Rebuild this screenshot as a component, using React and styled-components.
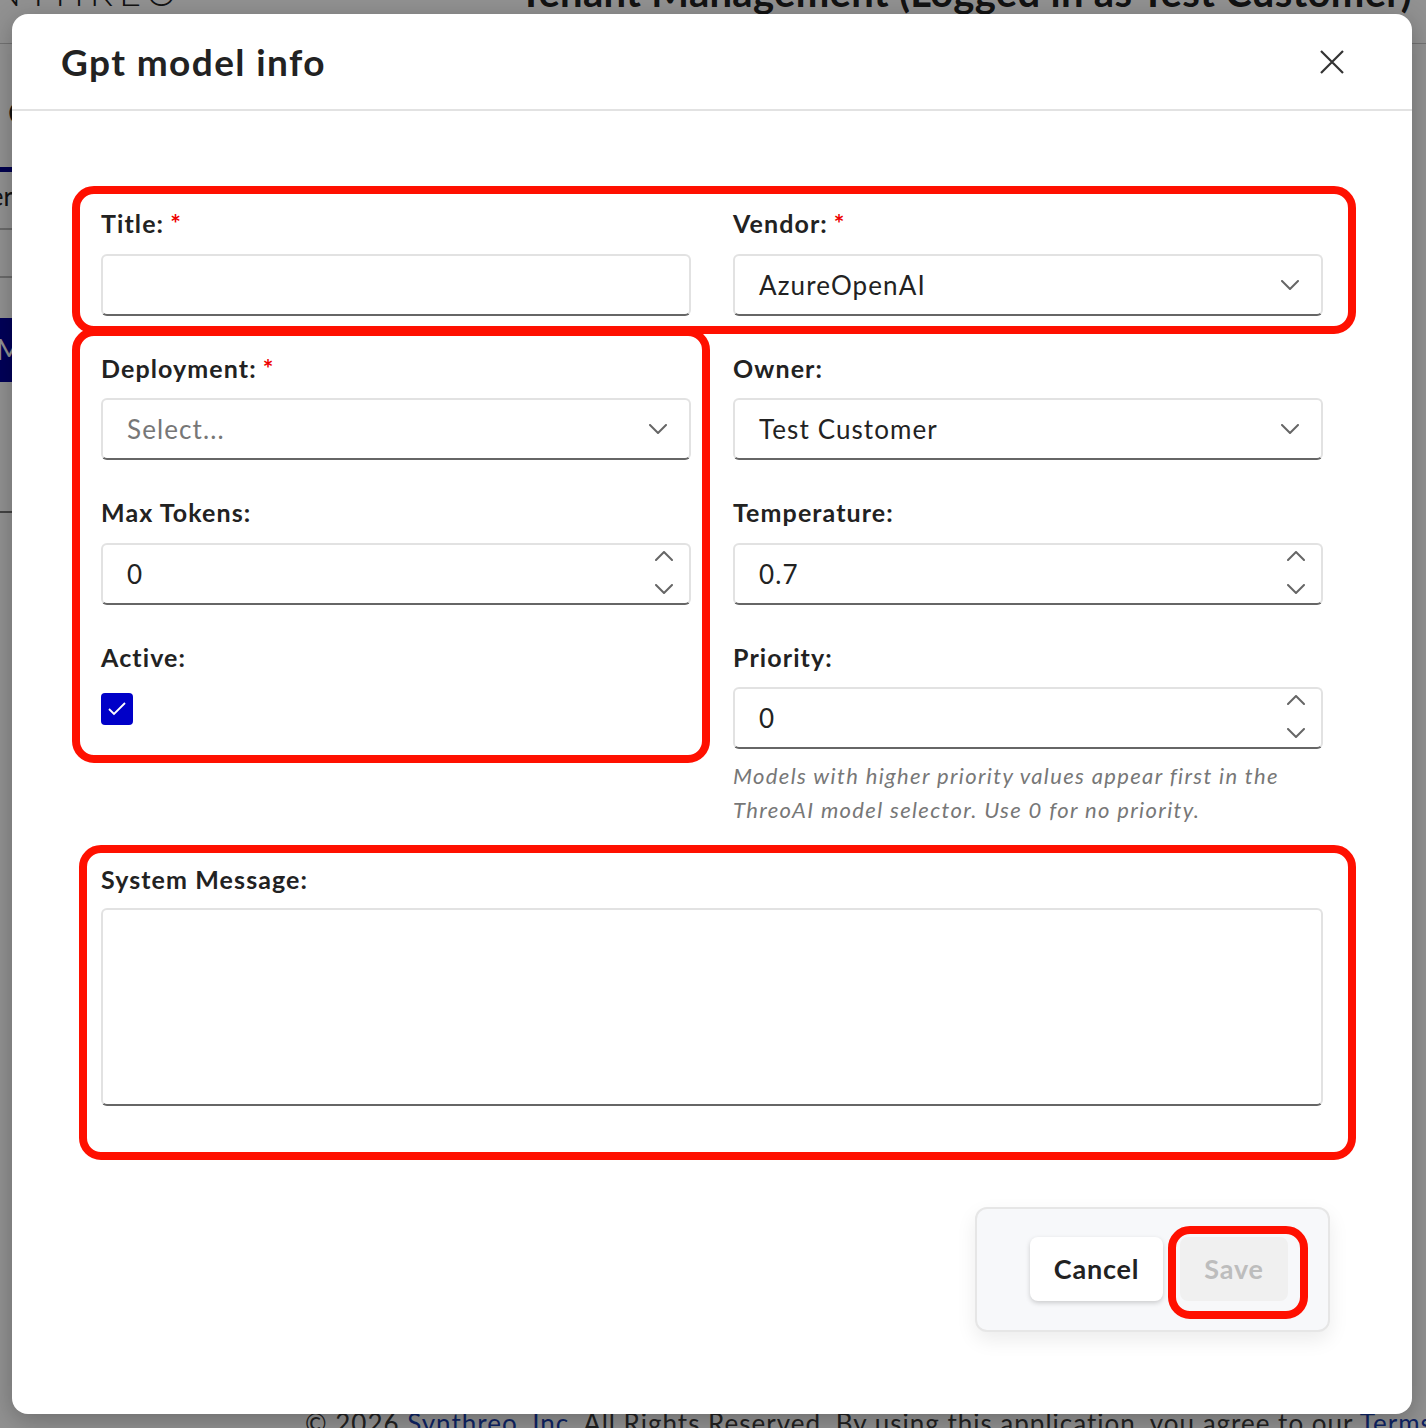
import React from 'react'
import styled, { createGlobalStyle } from 'styled-components'

const GlobalStyle = createGlobalStyle`
  html, body { margin: 0; padding: 0; }
  body { font-family: Lato, "Noto Sans", sans-serif; }
  * { box-sizing: border-box; }
`

const Page = styled.div`
  position: relative;
  width: 1426px;
  height: 1428px;
  overflow: hidden;
  background: #fff;
  display: flex;
  flex-direction: column;
  color: #222;
`

const TopBar = styled.header`
  height: 44px;
  border-bottom: 1px solid #c8c8c8;
  display: flex;
  justify-content: space-between;
  align-items: flex-start;
  padding: 0 14px 0 0;
  overflow: hidden;
`

const Logo = styled.div`
  font-size: 38px;
  font-weight: 300;
  letter-spacing: 6px;
  line-height: 40px;
  margin-top: -29px;
  margin-left: -62px;
`

const PageTitle = styled.div`
  font-size: 40px;
  font-weight: 700;
  letter-spacing: 0.3px;
  line-height: 40px;
  margin-top: -28px;
`

const SideContent = styled.div`
  display: flex;
  flex-direction: column;
  width: 400px;
`

const Heading = styled.div`
  font-size: 30px;
  height: 123px;
  padding: 50px 0 0 8px;
`

const TabLine = styled.div`
  height: 5px;
  width: 200px;
  background: #00008b;
`

const TableHead = styled.div`
  height: 56px;
  width: 13px;
  display: flex;
  justify-content: flex-end;
  white-space: nowrap;
  overflow: hidden;
  font-size: 26px;
  padding: 8px 0 0 0;
`

const TableRow = styled.div`
  height: ${p => p.$h}px;
  border-top: 2px solid ${p => p.$dark ? '#777' : '#bbb'};
`

const BlueBlock = styled.div`
  height: 64px;
  width: 240px;
  margin-bottom: 129px;
  background: #00009c;
  color: #fff;
  font-size: 28px;
  padding: 14px 0 0 0;
  margin-left: -4px;
`

const PageFooter = styled.footer`
  margin-top: auto;
  height: 20px;
  overflow: hidden;
  white-space: nowrap;
  padding-left: 305px;
  font-size: 26px;
  letter-spacing: 1px;
  line-height: 30px;
  color: #3a3a3a;
  a { color: #1a3fb0; text-decoration: none; }
`

const Overlay = styled.div`
  position: absolute;
  inset: 0;
  background: rgba(0, 0, 0, 0.43);
  padding: 14px 14px 14px 12px;
`

const Modal = styled.div`
  width: 1400px;
  height: 1400px;
  background: #fff;
  border-radius: 16px;
  box-shadow: 0 6px 24px rgba(0, 0, 0, 0.25);
  display: flex;
  flex-direction: column;
`

const ModalHeader = styled.div`
  height: 97px;
  border-bottom: 2px solid #e2e2e2;
  display: flex;
  align-items: center;
  justify-content: space-between;
  padding: 0 68px 0 49px;
`

const ModalTitle = styled.h2`
  margin: 0;
  font-size: 37px;
  font-weight: 700;
  color: #222;
  letter-spacing: 1.4px;
`

const CloseButton = styled.button`
  border: none;
  background: none;
  padding: 0;
  width: 24px;
  height: 24px;
  display: flex;
  cursor: pointer;
`

const Body = styled.div`
  padding: 97px 89px 0;
`

const Grid = styled.div`
  display: grid;
  grid-template-columns: 1fr 1fr;
  column-gap: 42px;
  row-gap: 37px;
`

const Field = styled.div`
  display: flex;
  flex-direction: column;
  grid-column: ${p => p.$full ? '1 / -1' : 'auto'};
`

const Label = styled.label`
  font-size: 25px;
  font-weight: 700;
  letter-spacing: 1.1px;
  line-height: 30px;
  color: #222;
  margin-bottom: ${p => p.$gap || 16}px;
  span { color: #e00; margin-left: 6px; }
`

const Box = styled.div`
  height: 62px;
  border: 2px solid #e2e2e2;
  border-bottom: 2px solid #666;
  border-radius: 6px;
  display: flex;
  align-items: center;
  padding: 0 22px 0 24px;
  font-size: 26px;
  letter-spacing: 1.1px;
  color: ${p => p.$placeholder ? '#777' : '#222'};
`

const BoxText = styled.div`
  flex: 1;
`

const TextInput = styled.input`
  flex: 1;
  border: none;
  outline: none;
  background: transparent;
  font: inherit;
  letter-spacing: inherit;
  color: inherit;
  padding: 0;
  min-width: 0;
`

const Spinner = styled.div`
  display: flex;
  flex-direction: column;
  gap: 23px;
  margin-right: -6px;
  margin-top: -3px;
`

const Checkbox = styled.span`
  width: 32px;
  height: 32px;
  margin-top: 5px;
  border-radius: 4px;
  background: #0000c8;
  display: flex;
  align-items: center;
  justify-content: center;
`

const Help = styled.p`
  margin: 10px 0 0;
  font-size: 22px;
  line-height: 34px;
  letter-spacing: 1.35px;
  font-style: italic;
  color: #777;
`

const TextArea = styled.textarea`
  height: 198px;
  border: 2px solid #e2e2e2;
  border-bottom: 2px solid #666;
  border-radius: 6px;
  resize: none;
  outline: none;
  font: inherit;
  font-size: 26px;
  padding: 16px 24px;
`

const FooterRow = styled.div`
  margin-top: auto;
  display: flex;
  justify-content: flex-end;
  padding: 0 82px 82px 0;
`

const ActionBox = styled.div`
  width: 355px;
  height: 125px;
  background: #f7f8fa;
  border: 2px solid #e6e6e6;
  border-radius: 12px;
  box-shadow: 0 8px 20px rgba(0, 0, 0, 0.08);
  display: flex;
  align-items: center;
  justify-content: flex-end;
  gap: 17px;
  padding: 0 40px 2px 0;
`

const Button = styled.button`
  height: 64px;
  width: ${p => p.$w}px;
  border: none;
  border-radius: 8px;
  font-family: inherit;
  font-size: 27px;
  font-weight: 700;
  letter-spacing: 0.8px;
  background: ${p => p.$disabled ? '#f0f0f0' : '#fff'};
  color: ${p => p.$disabled ? '#bdbdbd' : '#222'};
  box-shadow: ${p => p.$disabled ? 'none' : '0 2px 5px rgba(0,0,0,0.18)'};
  cursor: ${p => p.$disabled ? 'default' : 'pointer'};
`

const Mark = styled.div`
  position: absolute;
  left: ${p => p.$x}px;
  top: ${p => p.$y}px;
  width: ${p => p.$w}px;
  height: ${p => p.$h}px;
  border: 8px solid #ff1000;
  border-radius: 22px;
  pointer-events: none;
`

const Chevron = ({ up }) => (
  <svg width="18" height="10" viewBox="0 0 18 10">
    <polyline
      points={up ? '1,9 9,1 17,9' : '1,1 9,9 17,1'}
      fill="none"
      stroke="#666"
      strokeWidth="2"
      strokeLinecap="round"
      strokeLinejoin="round"
    />
  </svg>
)

const SelectBox = ({ value, placeholder }) => (
  <Box $placeholder={!value}>
    <BoxText>{value || placeholder}</BoxText>
    <Chevron />
  </Box>
)

const NumberBox = ({ value }) => (
  <Box>
    <TextInput defaultValue={value} />
    <Spinner>
      <Chevron up />
      <Chevron />
    </Spinner>
  </Box>
)

const App = () => {
  return (
    <Page>
      <GlobalStyle />
      <TopBar>
        <Logo>SYNTHREO</Logo>
        <PageTitle>Tenant Management (Logged in as Test Customer)</PageTitle>
      </TopBar>
      <SideContent>
        <Heading>Customers</Heading>
        <TabLine />
        <TableHead>Customer</TableHead>
        <TableRow $h={48} />
        <TableRow $h={42} />
        <BlueBlock>Manage</BlueBlock>
        <TableRow $h={66} $dark />
      </SideContent>
      <PageFooter>
        © 2026 <a href="#">Synthreo, Inc.</a> All Rights Reserved. By using this application, you agree to our <a href="#">Terms</a>
      </PageFooter>

      <Overlay>
        <Modal>
          <ModalHeader>
            <ModalTitle>Gpt model info</ModalTitle>
            <CloseButton aria-label="Close">
              <svg width="24" height="24" viewBox="0 0 24 24">
                <path d="M1 1 L23 23 M23 1 L1 23" stroke="#333" strokeWidth="2.2" fill="none" />
              </svg>
            </CloseButton>
          </ModalHeader>

          <Body>
            <Grid>
              <Field>
                <Label>Title:<span>*</span></Label>
                <Box><TextInput /></Box>
              </Field>
              <Field>
                <Label>Vendor:<span>*</span></Label>
                <SelectBox value="AzureOpenAI" />
              </Field>

              <Field>
                <Label $gap={15}>Deployment:<span>*</span></Label>
                <SelectBox placeholder="Select..." />
              </Field>
              <Field>
                <Label $gap={15}>Owner:</Label>
                <SelectBox value="Test Customer" />
              </Field>

              <Field>
                <Label>Max Tokens:</Label>
                <NumberBox value="0" />
              </Field>
              <Field>
                <Label>Temperature:</Label>
                <NumberBox value="0.7" />
              </Field>

              <Field>
                <Label>Active:</Label>
                <Checkbox>
                  <svg width="20" height="16" viewBox="0 0 20 16">
                    <polyline points="2,8 7,13 18,2" fill="none" stroke="#fff" strokeWidth="1.8" />
                  </svg>
                </Checkbox>
              </Field>
              <Field>
                <Label $gap={15}>Priority:</Label>
                <NumberBox value="0" />
                <Help>
                  Models with higher priority values appear first in the ThreoAI model selector. Use 0 for no priority.
                </Help>
              </Field>

              <Field $full>
                <Label $gap={14}>System Message:</Label>
                <TextArea />
              </Field>
            </Grid>
          </Body>

          <FooterRow>
            <ActionBox>
              <Button $w={133}>Cancel</Button>
              <Button $w={108} $disabled>Save</Button>
            </ActionBox>
          </FooterRow>
        </Modal>
      </Overlay>

      <Mark $x={72} $y={186} $w={1284} $h={148} />
      <Mark $x={72} $y={328} $w={638} $h={435} />
      <Mark $x={79} $y={845} $w={1277} $h={315} />
      <Mark $x={1168} $y={1226} $w={140} $h={93} />
    </Page>
  )
}

export default App
